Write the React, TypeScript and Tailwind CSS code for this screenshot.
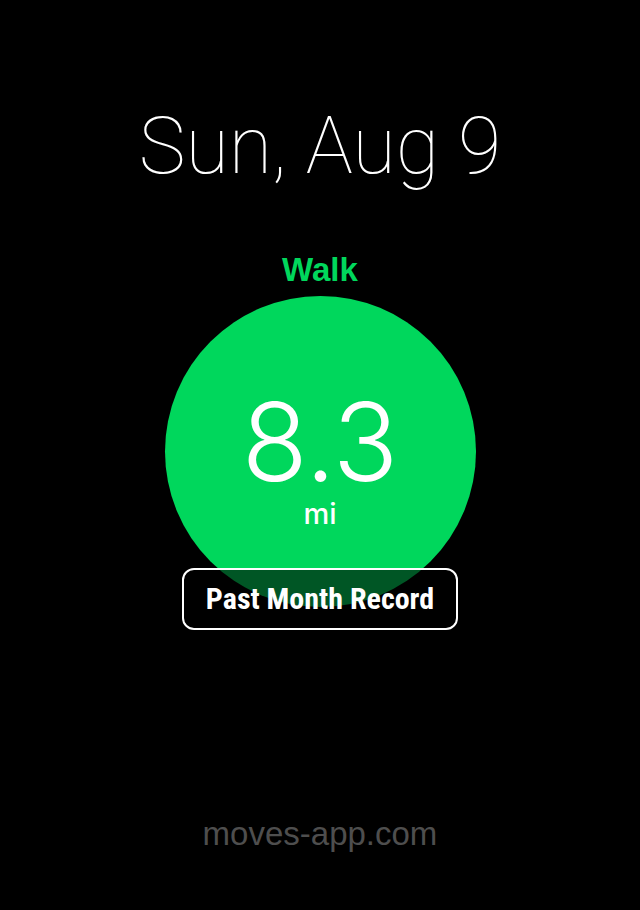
import React from "react";

export default function App() {
  return (
    <div className="w-[640px] h-[910px] bg-black flex flex-col items-center overflow-hidden">
      <div className="mt-[101px] text-white text-[79px] leading-[90px] font-thin font-['Roboto',sans-serif]">
        Sun, Aug 9
      </div>
      <div className="mt-[59px] text-[#00d75c] text-[33px] leading-[40px] font-bold font-['Liberation_Sans',Arial,sans-serif]">
        Walk
      </div>
      <div className="mt-[6px] w-[311px] h-[311px] rounded-full bg-[#00d75c] flex flex-col items-center">
        <div className="mt-[92px] text-white text-[108px] leading-[108px] font-light font-['Inter',sans-serif]">
          8.3
        </div>
        <div className="mt-[2px] text-white text-[29px] leading-[32px] font-medium font-['Inter',sans-serif]">
          mi
        </div>
      </div>
      <div className="relative -mt-[39px] w-[276px] h-[62px] rounded-[12px] border-2 border-white bg-black/60 flex items-center justify-center">
        <span className="text-white text-[30px] leading-none font-bold font-['Liberation_Sans_Narrow','Roboto_Condensed','Liberation_Sans',sans-serif]">
          Past Month Record
        </span>
      </div>
      <div className="mt-[184px] text-[#4e4e4e] text-[33px] leading-[40px] font-['Liberation_Sans',Arial,sans-serif]">
        moves-app.com
      </div>
    </div>
  );
}
